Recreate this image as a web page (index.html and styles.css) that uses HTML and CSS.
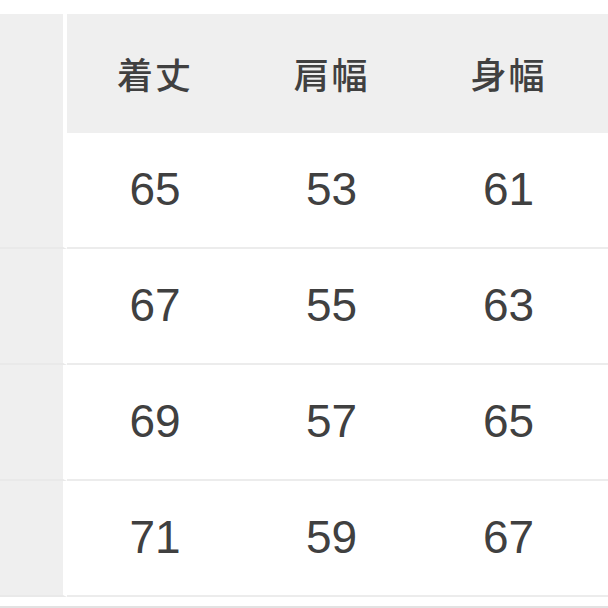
FILE: index.html
```html
<!DOCTYPE html>
<html lang="ja">
<head>
<meta charset="utf-8">
<link rel="stylesheet" href="styles.css">
</head>
<body>
<div class="page">
  <div class="table">
    <div class="cell side head"></div>
    <div class="cell head">着丈</div>
    <div class="cell head">肩幅</div>
    <div class="cell head">身幅</div>
    <div class="cell head"></div>

    <div class="cell side"></div>
    <div class="cell num">65</div>
    <div class="cell num">53</div>
    <div class="cell num">61</div>
    <div class="cell num"></div>

    <div class="cell side"></div>
    <div class="cell num">67</div>
    <div class="cell num">55</div>
    <div class="cell num">63</div>
    <div class="cell num"></div>

    <div class="cell side"></div>
    <div class="cell num">69</div>
    <div class="cell num">57</div>
    <div class="cell num">65</div>
    <div class="cell num"></div>

    <div class="cell side"></div>
    <div class="cell num">71</div>
    <div class="cell num">59</div>
    <div class="cell num">67</div>
    <div class="cell num"></div>
  </div>
  <div class="bottom-line"></div>
</div>
</body>
</html>
```

FILE: styles.css
```css
html, body {
  margin: 0;
  padding: 0;
  background: #ffffff;
}

.page {
  width: 608px;
  height: 608px;
  overflow: hidden;
  padding-top: 14px;
  box-sizing: border-box;
  display: flex;
  flex-direction: column;
}

.table {
  display: grid;
  grid-template-columns: 67px 176px 177px 177px 30px;
  grid-template-rows: 119px 116px 116px 116px 116px;
}

.cell {
  display: flex;
  align-items: center;
  justify-content: center;
  box-sizing: border-box;
  color: #3c3c3c;
}

.head {
  background: #efefef;
  font-family: "Noto Sans CJK JP", "Noto Sans", sans-serif;
  font-size: 36px;
  font-weight: 500;
  letter-spacing: 2px;
  color: #404040;
  padding-bottom: 2px;
}

.side {
  background: #efefef;
  border-right: 4px solid #ffffff;
}

.num {
  background: #ffffff;
  border-bottom: 2px solid #ececec;
  font-family: "Liberation Sans", Arial, sans-serif;
  font-size: 46px;
  color: #404040;
  padding-bottom: 2px;
}

.table .side:not(.head) {
  border-bottom: 2px solid #e9e9e9;
}

.bottom-line {
  margin-top: 9px;
  height: 2px;
  background: #e2e2e2;
}
```
